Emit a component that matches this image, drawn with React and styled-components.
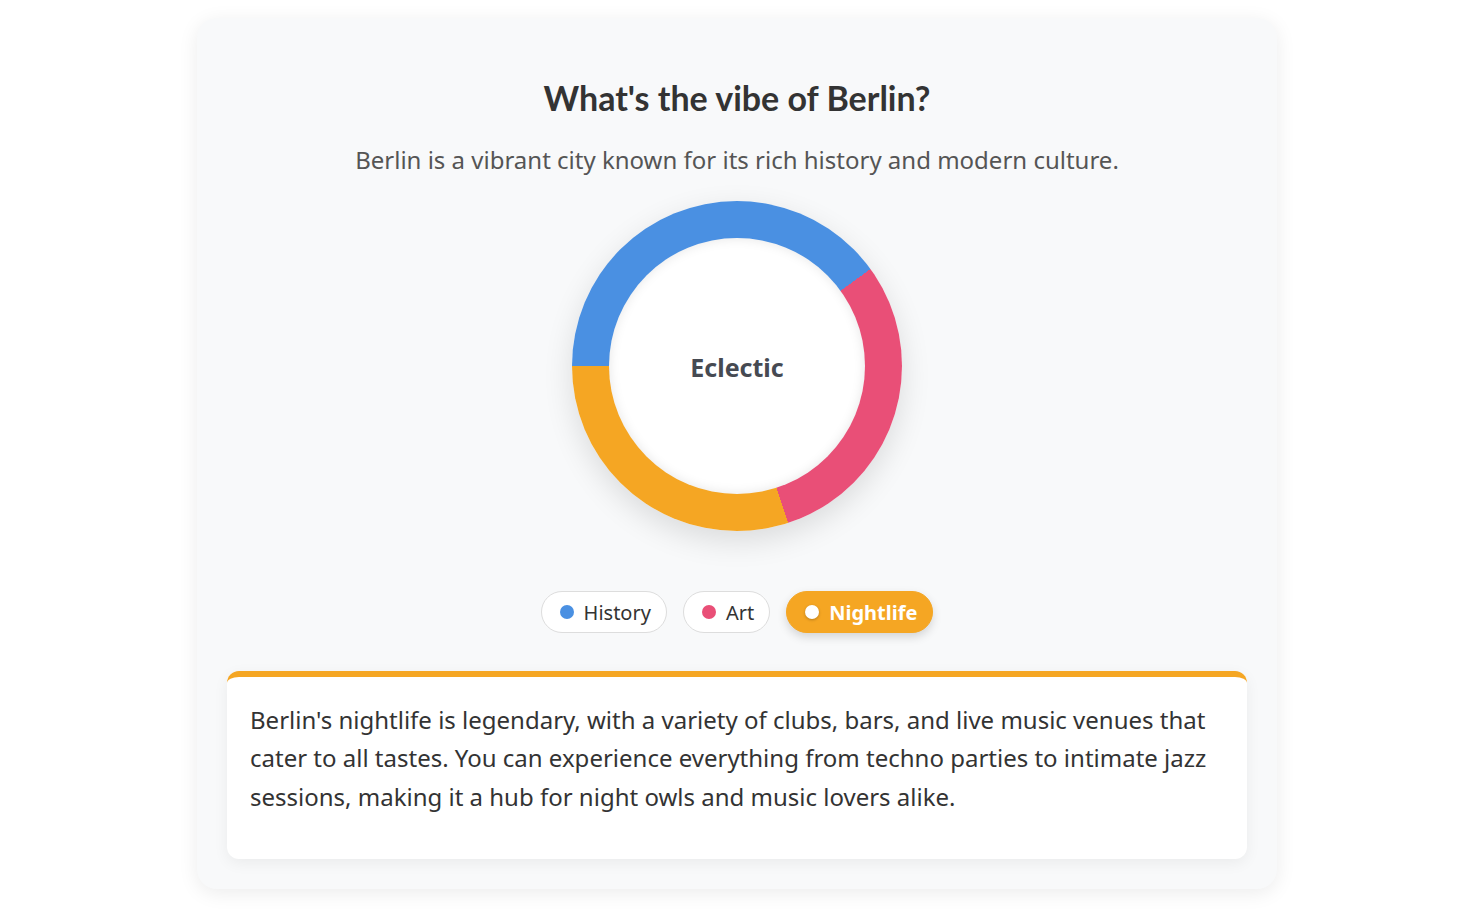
import React, { useState } from "react";
import styled, { createGlobalStyle, css } from "styled-components";

const GlobalStyle = createGlobalStyle`
  html, body {
    margin: 0;
    padding: 0;
    background: #ffffff;
  }
  body {
    font-family: "Noto Sans", "Open Sans", sans-serif;
    color: #333333;
  }
  * { box-sizing: border-box; }
`;

const Page = styled.div`
  display: flex;
  justify-content: center;
  padding: 18px 4px 22px 0;
`;

const Card = styled.section`
  width: 1080px;
  background: #f8f9fa;
  border-radius: 20px;
  box-shadow: 0 4px 20px rgba(0, 0, 0, 0.08);
  padding: 30px;
  display: flex;
  flex-direction: column;
  align-items: center;
`;

const Title = styled.h2`
  font-family: Lato, "Noto Sans", sans-serif;
  font-weight: 700;
  font-size: 34px;
  line-height: 40px;
  color: #333333;
  margin: 30px 0 0;
`;

const Subtitle = styled.p`
  font-size: 24px;
  line-height: 36px;
  color: #555555;
  margin: 24px 0 0;
`;

const Donut = styled.div`
  position: relative;
  margin-top: 23px;
  width: 330px;
  height: 330px;
  border-radius: 50%;
  background: conic-gradient(
    from -90deg,
    #4a90e2 0 40%,
    #e94f77 40% 70%,
    #f5a623 70% 100%
  );
  box-shadow: 0 10px 30px rgba(0, 0, 0, 0.12);
  display: flex;
  align-items: center;
  justify-content: center;
`;

const DonutHole = styled.div`
  width: 256px;
  height: 256px;
  border-radius: 50%;
  background: #ffffff;
  box-shadow: inset 0 0 12px rgba(0, 0, 0, 0.1);
  display: flex;
  align-items: center;
  justify-content: center;
`;

const DonutLabel = styled.span`
  font-size: 25px;
  font-weight: 700;
  color: #464a52;
  margin-top: 2px;
`;

const Chips = styled.div`
  display: flex;
  gap: 16px;
  margin-top: 60px;
`;

const Chip = styled.button`
  display: flex;
  align-items: center;
  gap: 10px;
  height: 42px;
  padding: 1px 15px 0 18px;
  border-radius: 21px;
  border: 1px solid #dddddd;
  background: #ffffff;
  font-family: "Noto Sans", sans-serif;
  font-size: 20px;
  color: #333333;
  cursor: pointer;
  ${(p) =>
    p.$active &&
    css`
      background: #f5a623;
      border-color: #f5a623;
      color: #ffffff;
      font-weight: 700;
      box-shadow: 0 4px 10px rgba(0, 0, 0, 0.15);
    `}
`;

const Dot = styled.span`
  width: 14px;
  height: 14px;
  border-radius: 50%;
  margin-top: -1px;
  background: ${(p) => p.$color};
  ${(p) =>
    p.$active &&
    css`
      background: #ffffff;
      box-shadow: 0 1px 3px rgba(0, 0, 0, 0.25);
    `}
`;

const Info = styled.div`
  align-self: stretch;
  margin-top: 38px;
  background: #ffffff;
  border-radius: 12px;
  border-top: 6px solid ${(p) => p.$color};
  box-shadow: 0 4px 15px rgba(0, 0, 0, 0.06);
  padding: 24px 23px 43px;
`;

const InfoText = styled.p`
  margin: 0;
  font-size: 24px;
  line-height: 38.4px;
  color: #333333;
`;

const categories = [
  {
    name: "History",
    color: "#4a90e2",
    text: "Berlin's history is visible everywhere, from the remnants of the Wall to its world-class museums and memorials.",
  },
  {
    name: "Art",
    color: "#e94f77",
    text: "Berlin's art scene thrives in galleries, street murals and creative collectives across the city.",
  },
  {
    name: "Nightlife",
    color: "#f5a623",
    text: "Berlin's nightlife is legendary, with a variety of clubs, bars, and live music venues that cater to all tastes. You can experience everything from techno parties to intimate jazz sessions, making it a hub for night owls and music lovers alike.",
  },
];

export default function App() {
  const [active, setActive] = useState("Nightlife");
  const current = categories.find((c) => c.name === active);
  return (
    <>
      <GlobalStyle />
      <Page>
        <Card>
          <Title>What's the vibe of Berlin?</Title>
          <Subtitle>
            Berlin is a vibrant city known for its rich history and modern culture.
          </Subtitle>
          <Donut>
            <DonutHole>
              <DonutLabel>Eclectic</DonutLabel>
            </DonutHole>
          </Donut>
          <Chips>
            {categories.map((c) => (
              <Chip
                key={c.name}
                $active={c.name === active}
                onClick={() => setActive(c.name)}
              >
                <Dot $color={c.color} $active={c.name === active} />
                {c.name}
              </Chip>
            ))}
          </Chips>
          <Info $color={current.color}>
            <InfoText>{current.text}</InfoText>
          </Info>
        </Card>
      </Page>
    </>
  );
}
